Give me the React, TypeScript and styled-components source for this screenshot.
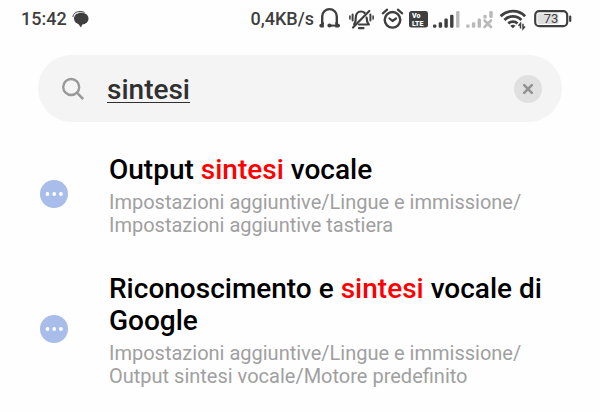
import React, { useState } from "react";
import styled, { createGlobalStyle } from "styled-components";

const INK = "#3f3f3f";

const GlobalStyle = createGlobalStyle`
  *, *::before, *::after { box-sizing: border-box; }
  body {
    margin: 0;
    background: #fefefe;
    font-family: Roboto, sans-serif;
  }
`;

const StatusBar = styled.header`
  display: flex;
  align-items: center;
  justify-content: space-between;
  height: 38px;
  padding: 0 28px 0 21px;
  color: ${INK};
  font-size: 18px;
  line-height: 24px;
  font-weight: 500;
`;

const StatusGroup = styled.div`
  display: flex;
  align-items: center;
  gap: 5px;
`;

const StatusIcon = styled.svg`
  display: block;
  height: 24px;
  flex: none;
`;

const SearchBar = styled.form`
  display: flex;
  align-items: center;
  height: 67px;
  margin: 17px 38px 0;
  padding: 0 20px 0 22px;
  border-radius: 34px;
  background: #f4f4f4;
`;

const SearchLabel = styled.label`
  display: flex;
  flex: none;
  width: 47px;
`;

const SearchInput = styled.input`
  flex: 1;
  min-width: 0;
  height: 40px;
  padding: 2px 0 0;
  border: 0;
  outline: 0;
  background: transparent;
  color: #303030;
  font: 500 28px/36px Roboto, sans-serif;
  text-decoration: underline;
  text-decoration-thickness: 1px;
  text-underline-offset: 3px;
`;

const ClearButton = styled.button`
  display: flex;
  align-items: center;
  justify-content: center;
  flex: none;
  width: 28px;
  height: 28px;
  padding: 0;
  border: 0;
  border-radius: 50%;
  background: #e0e0e0;
  cursor: pointer;
`;

const Results = styled.ul`
  display: flex;
  flex-direction: column;
  gap: 36px;
  margin: 0;
  padding: 32px 38px 24px 40px;
  list-style: none;
`;

const ResultLink = styled.a`
  display: flex;
  align-items: center;
  gap: 41px;
  color: inherit;
  text-decoration: none;
`;

const ResultIcon = styled.span`
  display: flex;
  flex: none;
  padding-bottom: 4px;
`;

const ResultText = styled.div`
  flex: 1;
  min-width: 0;
`;

const Title = styled.h2`
  margin: 0 0 5px;
  color: #000;
  font-size: 28px;
  line-height: 32px;
  font-weight: 500;
`;

const Match = styled.span`
  color: #fe0000;
`;

const Path = styled.p`
  margin: 0;
  color: #a0a0a0;
  font-size: 20px;
  line-height: 23px;
  font-weight: 400;
`;

const ChatIcon = () => (
  <StatusIcon width="18" viewBox="0 0 18 24" aria-hidden="true">
    <path d="M9.300 5.800c4.300 0 7.200 2.300 7.200 5.800 0 3.400-2.600 5.700-6.200 6l-1.300 3-2.400-3.400C4 16.500 2 14.500 2 11.600c0-3.500 2.900-5.800 7.300-5.800z" fill={INK} />
    <path d="M.9 10C1.200 6.400 4.200 4.500 8 4.500c1.800 0 3.300.3 4.600.9" fill="none" stroke={INK} strokeWidth="1" />
    <path d="M1.800 10.300C2.200 7.300 4.900 5.400 8.700 5.300" fill="none" stroke="#c8c8c8" strokeWidth=".6" />
  </StatusIcon>
);

const HeadphonesIcon = () => (
  <StatusIcon width="24" viewBox="0 0 24 24" fill="none" aria-hidden="true">
    <path d="M3.200 17V9.400a7.300 7.300 0 0 1 14.600 0V17" stroke={INK} strokeWidth="2.400" />
    <path d="M4.900 15v5.400H2Q.3 20.400.3 18.700t1.700-1.900zM16.300 15v5.400h3q1.700 0 1.700-1.700t-1.700-1.900z" fill={INK} />
    <path d="M10.500 18.600H17" stroke={INK} strokeWidth="2" />
    <circle cx="10.500" cy="18.500" r="2.100" fill={INK} />
  </StatusIcon>
);

const MutedBellIcon = () => (
  <StatusIcon width="28" viewBox="0 0 28 24" fill="none" stroke={INK} strokeLinecap="round" aria-hidden="true">
    <path d="M6.200 17.300c1.500-1.800 1.600-3.500 1.600-6.500 0-4 2-6.300 5.200-6.300 1.500 0 2.700.500 3.600 1.400M18.600 10.500c0 3.600.5 5.200 2.200 7H11" strokeWidth="2.200" strokeLinejoin="round" />
    <path d="M5 20.500 21.300 4" strokeWidth="2.200" />
    <path d="M11 21.200h4.500" strokeWidth="2.200" />
    <path d="M4.600 7.500v6M22.400 7.500v6" strokeWidth="2" />
    <path d="M1.900 9v3M25.100 9v3" strokeWidth="1.600" />
  </StatusIcon>
);

const AlarmIcon = () => (
  <StatusIcon width="23" viewBox="0 0 23 24" fill="none" stroke={INK} strokeLinecap="round" aria-hidden="true">
    <circle cx="11.500" cy="12.800" r="7.800" strokeWidth="2.400" />
    <path d="m1.800 6.300 4.300-3.600M16.900 2.700l4.300 3.600" strokeWidth="2.200" />
    <path d="m8.500 11.500 3 2.500 3.500-2.500" strokeWidth="2.200" strokeLinejoin="round" />
  </StatusIcon>
);

const VolteIcon = () => (
  <StatusIcon width="19" viewBox="0 0 19 24" role="img" aria-label="VoLTE">
    <rect x="0" y="4" width="19" height="16.500" rx="2.500" fill={INK} />
    <g fill="#fff" fontFamily="Roboto, sans-serif" fontWeight="900" fontSize="7">
      <text x="3" y="11">Vo</text>
      <text x="3" y="19">LTE</text>
    </g>
  </StatusIcon>
);

const SignalIcon = () => (
  <StatusIcon width="27" viewBox="0 0 27 24" fill={INK} aria-hidden="true">
    <rect x="0" y="17.500" width="3.400" height="3.200" rx="1.200" />
    <rect x="5.700" y="15.200" width="3.400" height="5.500" rx="1.200" />
    <rect x="11.400" y="11.500" width="3.400" height="9.200" rx="1.200" />
    <rect x="17.100" y="7.800" width="3.400" height="12.900" rx="1.200" />
    <rect x="23.100" y="4" width="3.400" height="16.700" rx="1.200" fill="#b9b9b9" />
  </StatusIcon>
);

const NoSignalIcon = () => (
  <StatusIcon width="29" viewBox="0 0 29 24" fill="#b9b9b9" aria-hidden="true">
    <rect x="1.200" y="17.500" width="3.400" height="3.200" rx="1.200" />
    <rect x="6.900" y="15.200" width="3.400" height="5.500" rx="1.200" />
    <rect x="12.600" y="11.500" width="3.400" height="9.200" rx="1.200" />
    <rect x="18.300" y="7.800" width="3.400" height="3.700" rx="1.200" />
    <rect x="24.300" y="4" width="3.400" height="7" rx="1.200" />
    <path d="m19.500 13.500 6.500 6.500M26 13.500l-6.500 6.500" stroke="#b9b9b9" strokeWidth="2.600" strokeLinecap="round" />
  </StatusIcon>
);

const WifiIcon = () => (
  <StatusIcon width="29" viewBox="0 0 29 24" fill="none" stroke={INK} strokeWidth="2.800" aria-hidden="true">
    <path d="M1.700 9.200a17.200 17.200 0 0 1 24.400 0M5.400 13a12 12 0 0 1 17 0M9.300 16.500a6.600 6.600 0 0 1 9.200 0" />
    <path d="m11.200 18.700 2.700 2.600 2.700-2.600q-2.700-1.800-5.400 0z" fill={INK} stroke="none" />
    <path d="M21.500 21.500v-5l-2 2.200M24 16.700v5l2-2.200" strokeWidth="1.500" />
  </StatusIcon>
);

const BatteryIcon = () => (
  <StatusIcon width="39" viewBox="0 0 39 24" role="img" aria-label="73%">
    <rect x="2.200" y="4.200" width="32" height="15" rx="4" fill="#fff" stroke={INK} strokeWidth="2.200" />
    <rect x="4.500" y="6.500" width="21" height="10.500" rx="1.500" fill="#dedede" />
    <path d="M37.200 9.500v4.400" stroke={INK} strokeWidth="2.200" strokeLinecap="round" />
    <text x="18" y="16.400" textAnchor="middle" fontFamily="Roboto, sans-serif" fontSize="13" fontWeight="400" fill={INK}>73</text>
  </StatusIcon>
);

const SearchIcon = () => (
  <svg width="28" height="28" viewBox="0 0 28 28" fill="none" stroke="#999" strokeWidth="2.400" aria-hidden="true">
    <circle cx="11.200" cy="12" r="8" />
    <path d="m16.900 17.700 6.300 6.500" strokeWidth="2.600" />
  </svg>
);

const ClearIcon = () => (
  <svg width="12" height="12" viewBox="0 0 12 12" stroke="#929292" strokeWidth="2.600" strokeLinecap="round" aria-hidden="true">
    <path d="m2.200 2.200 7.600 7.600M9.800 2.200 2.200 9.800" />
  </svg>
);

const MoreIcon = () => (
  <svg width="28" height="28" viewBox="0 0 28 28" aria-hidden="true">
    <circle cx="14" cy="14" r="14" fill="#a8bdea" />
    <g fill="#fff">
      <circle cx="7.500" cy="14" r="1.900" />
      <circle cx="14.200" cy="14" r="1.900" />
      <circle cx="20.900" cy="14" r="1.900" />
    </g>
  </svg>
);

const results = [
  {
    before: "Output ",
    match: "sintesi",
    after: " vocale",
    path: ["Impostazioni aggiuntive", "Lingue e immissione", "Impostazioni aggiuntive tastiera"],
  },
  {
    before: "Riconoscimento e ",
    match: "sintesi",
    after: " vocale di Google",
    path: ["Impostazioni aggiuntive", "Lingue e immissione", "Output sintesi vocale", "Motore predefinito"],
  },
];

export default function App() {
  const [query, setQuery] = useState("sintesi");

  return (
    <>
      <GlobalStyle />
      <StatusBar>
        <StatusGroup>
          <time>15:42</time>
          <ChatIcon />
        </StatusGroup>
        <StatusGroup>
          <span>0,4KB/s</span>
          <HeadphonesIcon />
          <MutedBellIcon />
          <AlarmIcon />
          <VolteIcon />
          <SignalIcon />
          <NoSignalIcon />
          <WifiIcon />
          <BatteryIcon />
        </StatusGroup>
      </StatusBar>
      <main>
        <SearchBar role="search" onSubmit={(e) => e.preventDefault()}>
          <SearchLabel htmlFor="query" aria-label="Cerca">
            <SearchIcon />
          </SearchLabel>
          <SearchInput
            id="query"
            type="text"
            value={query}
            spellCheck={false}
            onChange={(e) => setQuery(e.target.value)}
          />
          <ClearButton type="button" aria-label="Cancella" onClick={() => setQuery("")}>
            <ClearIcon />
          </ClearButton>
        </SearchBar>
        <Results>
          {results.map((item) => (
            <li key={item.before}>
              <ResultLink href="#">
                <ResultIcon>
                  <MoreIcon />
                </ResultIcon>
                <ResultText>
                  <Title>
                    {item.before}
                    <Match>{item.match}</Match>
                    {item.after}
                  </Title>
                  <Path>
                    {item.path.map((part, i) => (
                      <React.Fragment key={part}>
                        {i > 0 && "/"}
                        {i > 0 && <wbr />}
                        {part}
                      </React.Fragment>
                    ))}
                  </Path>
                </ResultText>
              </ResultLink>
            </li>
          ))}
        </Results>
      </main>
    </>
  );
}
